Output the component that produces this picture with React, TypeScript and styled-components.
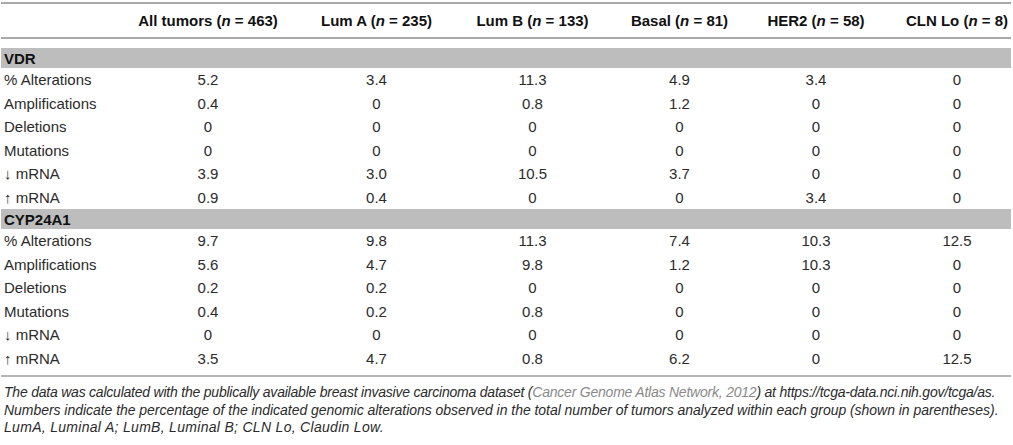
import React from "react";
import styled, { createGlobalStyle } from "styled-components";

const GlobalStyle = createGlobalStyle`
  html, body { margin: 0; padding: 0; background: #ffffff; }
  body { font-family: "Liberation Sans", Arial, sans-serif; color: #2b2b2b; }
`;

const COLS = "116px 182px 155px 157px 137px 136px 126px";

const Wrapper = styled.div`
  width: 1010px;
  margin-left: 1px;
  padding-top: 2px;
`;

const Table = styled.div`
  display: flex;
  flex-direction: column;
  border-bottom: 2px solid #b4b4b4;
  padding-bottom: 5px;
`;

const HeaderRow = styled.div`
  display: grid;
  grid-template-columns: ${COLS};
  align-items: center;
  height: 33px;
  border-top: 2px solid #a9a9a9;
  border-bottom: 2px solid #a9a9a9;
  margin-bottom: 9px;
`;

const HeadCell = styled.div`
  font-size: 15px;
  font-weight: bold;
  color: #111;
  text-align: center;
  white-space: nowrap;
  &:last-child { padding-left: 20px; }
`;

const Band = styled.div`
  background: #bdbdbd;
  height: 20px;
  display: flex;
  align-items: center;
  padding-left: 3px;
  font-size: 15px;
  font-weight: bold;
  color: #111;
`;

const Row = styled.div`
  display: grid;
  grid-template-columns: ${COLS};
  align-items: center;
  height: 23.5px;
`;

const Cell = styled.div<{ $label?: boolean }>`
  font-size: 15px;
  text-align: ${(p) => (p.$label ? "left" : "center")};
  padding-left: ${(p) => (p.$label ? "3px" : "0")};
  white-space: nowrap;
  &:last-child { padding-left: 20px; }
`;

const Footnote = styled.div`
  margin-top: 7px;
  padding-left: 3px;
  display: flex;
  flex-direction: column;
`;

const NoteLine = styled.div<{ $spacing?: number }>`
  font-size: 14px;
  font-style: italic;
  line-height: 17.5px;
  color: #2b2b2b;
  white-space: nowrap;
  letter-spacing: ${(p) => p.$spacing ?? 0}px;
`;

const Cite = styled.span`
  color: #8a8a8a;
`;

const N = styled.i`
  font-style: italic;
`;

const headers: [string, string][] = [
  ["All tumors", "463"],
  ["Lum A", "235"],
  ["Lum B", "133"],
  ["Basal", "81"],
  ["HER2", "58"],
  ["CLN Lo", "8"],
];

type Section = { name: string; rows: [string, string[]][] };

const sections: Section[] = [
  {
    name: "VDR",
    rows: [
      ["% Alterations", ["5.2", "3.4", "11.3", "4.9", "3.4", "0"]],
      ["Amplifications", ["0.4", "0", "0.8", "1.2", "0", "0"]],
      ["Deletions", ["0", "0", "0", "0", "0", "0"]],
      ["Mutations", ["0", "0", "0", "0", "0", "0"]],
      ["\u2193 mRNA", ["3.9", "3.0", "10.5", "3.7", "0", "0"]],
      ["\u2191 mRNA", ["0.9", "0.4", "0", "0", "3.4", "0"]],
    ],
  },
  {
    name: "CYP24A1",
    rows: [
      ["% Alterations", ["9.7", "9.8", "11.3", "7.4", "10.3", "12.5"]],
      ["Amplifications", ["5.6", "4.7", "9.8", "1.2", "10.3", "0"]],
      ["Deletions", ["0.2", "0.2", "0", "0", "0", "0"]],
      ["Mutations", ["0.4", "0.2", "0.8", "0", "0", "0"]],
      ["\u2193 mRNA", ["0", "0", "0", "0", "0", "0"]],
      ["\u2191 mRNA", ["3.5", "4.7", "0.8", "6.2", "0", "12.5"]],
    ],
  },
];

export default function App() {
  return (
    <>
      <GlobalStyle />
      <Wrapper>
        <Table>
          <HeaderRow>
            <HeadCell />
            {headers.map(([label, n]) => (
              <HeadCell key={label}>
                {label} (<N>n</N> = {n})
              </HeadCell>
            ))}
          </HeaderRow>
          {sections.map((s) => (
            <React.Fragment key={s.name}>
              <Band>{s.name}</Band>
              {s.rows.map(([label, vals]) => (
                <Row key={s.name + label}>
                  <Cell $label>{label}</Cell>
                  {vals.map((v, i) => (
                    <Cell key={i}>{v}</Cell>
                  ))}
                </Row>
              ))}
            </React.Fragment>
          ))}
        </Table>
        <Footnote>
          <NoteLine $spacing={-0.22}>
            The data was calculated with the publically available breast invasive carcinoma dataset (
            <Cite>Cancer Genome Atlas Network, 2012</Cite>) at https://tcga-data.nci.nih.gov/tcga/as.
          </NoteLine>
          <NoteLine $spacing={-0.04}>
            Numbers indicate the percentage of the indicated genomic alterations observed in the total number of tumors analyzed within each group (shown in parentheses).
          </NoteLine>
          <NoteLine $spacing={0.3}>LumA, Luminal A; LumB, Luminal B; CLN Lo, Claudin Low.</NoteLine>
        </Footnote>
      </Wrapper>
    </>
  );
}
